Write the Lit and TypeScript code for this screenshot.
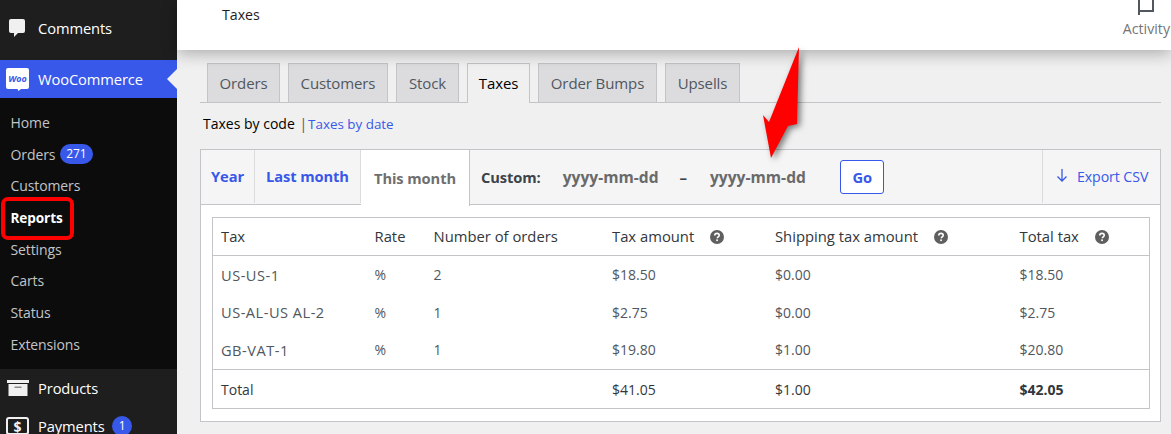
import { html, css, LitElement } from 'lit';
import { customElement } from 'lit/decorators.js';

const subItems = ['Home', 'Orders', 'Customers', 'Reports', 'Settings', 'Carts', 'Status', 'Extensions'];
const tabs = ['Orders', 'Customers', 'Stock', 'Taxes', 'Order Bumps', 'Upsells'];
const rows = [
  ['US-US-1', '%', '2', '$18.50', '$0.00', '$18.50'],
  ['US-AL-US AL-2', '%', '1', '$2.75', '$0.00', '$2.75'],
  ['GB-VAT-1', '%', '1', '$19.80', '$1.00', '$20.80'],
];

const help = html`<svg class="help" viewBox="0 0 14 14" width="14" height="14">
  <circle cx="7" cy="7" r="7" fill="#5f5f5f"></circle>
  <path d="M4.8 5.4c0-1.3 1-2 2.2-2s2.2.7 2.2 1.9c0 1.6-1.900 1.600-1.900 3" fill="none" stroke="#fff" stroke-width="1.6"></path>
  <rect x="6.2" y="9.4" width="1.7" height="1.7" fill="#fff"></rect>
</svg>`;

@customElement('app-root')
export class AppRoot extends LitElement {
  static styles = css`
    :host {
      display: block;
      width: 1171px;
      height: 434px;
      overflow: hidden;
      position: relative;
      font-family: 'Open Sans', 'Noto Sans', sans-serif;
      font-size: 14px;
      color: #3c434a;
      background: #f0f0f0;
    }
    .page {
      display: grid;
      grid-template-columns: 177px 1fr;
      height: 434px;
    }
    .side {
      background: #1e1e1e;
      color: #fff;
      font-size: 14.7px;
      letter-spacing: -0.1px;
    }
    .top {
      display: flex;
      align-items: center;
      height: 38px;
      padding-left: 6px;
      gap: 9px;
    }
    .top svg {
      flex: none;
    }
    .top.comments {
      height: 60px;
      padding: 0 0 5px 9px;
      gap: 13px;
      box-sizing: border-box;
    }
    .top.woo {
      background: #3858e9;
      position: relative;
    }
    .top.woo::after {
      content: '';
      position: absolute;
      right: 0;
      top: 9px;
      border: 10px solid transparent;
      border-right-color: #f0f0f0;
      border-left-width: 0;
    }
    .top.products {
      padding-left: 7px;
      gap: 9px;
    }
    .sub {
      background: #0c0c0c;
      padding: 8.6px 0 9px;
      color: #c3c4c7;
      font-size: 14px;
    }
    .sub div {
      display: flex;
      align-items: center;
      height: 31.7px;
      padding-left: 10.5px;
    }
    .sub .on {
      color: #fff;
      font-weight: 700;
      font-size: 13.6px;
    }
    .count {
      display: inline-block;
      margin-left: 5px;
      padding: 0 6px;
      border-radius: 10px;
      background: #3858e9;
      color: #fff;
      font-size: 12px;
      line-height: 20px;
    }
    .count.pay {
      margin-left: -2px;
      padding: 0 7px;
    }
    .main {
      min-width: 0;
    }
    .bar {
      display: flex;
      justify-content: space-between;
      height: 50px;
      background: #fff;
      box-shadow: 0 4px 16px rgba(0, 0, 0, 0.28);
      position: relative;
      color: #1e1e1e;
    }
    .bar h1 {
      margin: 6px 0 0 45px;
      font-size: 14.2px;
      line-height: 18px;
      font-weight: 400;
    }
    .activity {
      display: flex;
      flex-direction: column;
      align-items: center;
      height: 50px;
      margin: -5px 1px 0 0;
      color: #757575;
      font-size: 14.2px;
      line-height: 18px;
    }
    .activity svg {
      display: block;
      margin: 0 0 5px;
    }
    .content {
      padding: 13px 10px 0 23px;
    }
    .tabs {
      display: flex;
      gap: 8px;
      height: 39px;
      padding-left: 7px;
      border-bottom: 1px solid #c3c4c7;
    }
    .tab {
      box-sizing: border-box;
      height: 39px;
      padding-top: 10px;
      text-align: center;
      background: #dcdcde;
      border: 1px solid #c3c4c7;
      border-bottom: none;
      color: #50575e;
      font-size: 15px;
      line-height: 19px;
      font-weight: 500;
      letter-spacing: -0.1px;
    }
    .tab.on {
      height: 40px;
      background: #f0f0f0;
      color: #000;
    }
    .links {
      margin: 11px 0 0 3px;
      height: 19px;
      line-height: 19px;
      color: #000;
      font-size: 14px;
    }
    .links a {
      color: #3858e9;
      font-size: 13.4px;
      margin-left: 1px;
    }
    .links i {
      font-style: normal;
      color: #50575e;
      margin-left: 1px;
    }
    .card {
      box-sizing: border-box;
      width: 961px;
      height: 273px;
      margin: 16px 0 0;
      border: 1px solid #c3c4c7;
      background: #fff;
    }
    .ranges {
      display: flex;
      align-items: center;
      height: 55px;
      background: #f5f5f5;
      border-bottom: 1px solid #c3c4c7;
      box-sizing: border-box;
      font-size: 14.7px;
      font-weight: 700;
      letter-spacing: -0.1px;
    }
    .range {
      display: flex;
      align-items: center;
      justify-content: center;
      box-sizing: border-box;
      height: 53px;
      margin-bottom: 2px;
      border-right: 1px solid #dcdcde;
      color: #3858e9;
    }
    .range.on {
      height: 56px;
      margin: 0 0 -1px;
      background: #fff;
      color: #6f6f6f;
      border-right-color: #c3c4c7;
    }
    .custom {
      display: flex;
      align-items: center;
      margin-left: 11px;
      color: #3c434a;
    }
    .custom .date {
      color: #6a6a6a;
      margin-left: 22px;
      font-size: 15.6px;
      letter-spacing: 0;
    }
    .custom .dash {
      margin-left: 21px;
      font-size: 15px;
    }
    .custom .dash + .date {
      margin-left: 23px;
    }
    .go {
      box-sizing: border-box;
      width: 44px;
      height: 34px;
      margin-left: 34.4px;
      display: flex;
      align-items: center;
      justify-content: center;
      border: 1px solid #3858e9;
      border-radius: 3px;
      background: #fff;
      color: #3858e9;
    }
    .export {
      display: flex;
      align-items: center;
      gap: 9px;
      box-sizing: border-box;
      height: 53px;
      margin: 0 0 2px auto;
      width: 118px;
      padding-left: 13px;
      border-left: 1px solid #dcdcde;
      color: #3858e9;
      font-weight: 400;
      font-size: 14.2px;
    }
    .wrap {
      padding: 12px 11px;
    }
    table {
      width: 938px;
      table-layout: fixed;
      border-collapse: collapse;
      border: 1px solid #c3c4c7;
      font-size: 14px;
      color: #50575e;
    }
    th,
    td {
      padding: 0 0 0 8px;
      text-align: left;
      font-weight: 400;
      height: 37.5px;
      white-space: nowrap;
    }
    thead th {
      color: #32373c;
      height: 38px;
      padding-bottom: 1px;
      box-sizing: border-box;
      font-size: 14.8px;
      border-bottom: 1px solid #c3c4c7;
    }
    tbody td:first-child {
      font-size: 14.6px;
      letter-spacing: 0.5px;
    }
    tfoot td {
      color: #32373c;
      height: 39px;
      padding-top: 1px;
      box-sizing: border-box;
      border-top: 1px solid #c3c4c7;
    }
    tfoot b {
      font-weight: 700;
    }
    .help {
      vertical-align: -2px;
      margin-left: 16px;
    }
    .arrow {
      position: absolute;
      left: 755px;
      top: 40px;
      filter: drop-shadow(3px 2px 3px rgba(0, 0, 0, 0.5));
    }
    .mark {
      position: absolute;
      left: 1px;
      top: 197px;
      box-sizing: border-box;
      width: 73px;
      height: 43px;
      border: 4px solid #f00;
      border-radius: 7px;
    }
  `;

  render() {
    const tabWidths = [73, 100, 63, 63, 119, 75];
    const rangeWidths = [54, 106, 109];
    return html`
      <div class="page">
        <aside class="side">
          <div class="top comments">
            <svg viewBox="0 0 16 18" width="16" height="18">
              <path d="M2 0h12a2 2 0 0 1 2 2v10a2 2 0 0 1-2 2H9l-4 4v-4H2a2 2 0 0 1-2-2V2a2 2 0 0 1 2-2z" fill="#f0f0f1"></path>
            </svg>
            <span>Comments</span>
          </div>
          <div class="top woo">
            <svg viewBox="0 0 23 23" width="23" height="23">
              <path d="M2 0h19a2 2 0 0 1 2 2v17a2 2 0 0 1-2 2h-6l-2.500 2-1-2H2a2 2 0 0 1-2-2V2a2 2 0 0 1 2-2z" fill="#fff"></path>
              <text x="11.500" y="13.500" text-anchor="middle" fill="#3858e9" font-size="9" font-weight="700" font-style="italic">Woo</text>
            </svg>
            <span>WooCommerce</span>
          </div>
          <div class="sub">
            ${subItems.map(
              (s) => html`<div class=${s === 'Reports' ? 'on' : ''}>
                ${s}${s === 'Orders' ? html`<span class="count">271</span>` : ''}
              </div>`,
            )}
          </div>
          <div class="top products">
            <svg viewBox="0 0 22 16" width="22" height="16">
              <rect x="0" y="0" width="22" height="3" fill="#f0f0f1"></rect>
              <rect x="1.500" y="4" width="19" height="12" fill="#f0f0f1"></rect>
              <rect x="7.500" y="6.500" width="7" height="1.500" fill="#8a8a8a"></rect>
            </svg>
            <span>Products</span>
          </div>
          <div class="top">
            <svg viewBox="0 0 23 18" width="23" height="18">
              <rect x="1" y="1" width="21" height="16" rx="2" fill="none" stroke="#f0f0f1" stroke-width="2"></rect>
              <text x="11.500" y="14.500" text-anchor="middle" fill="#f0f0f1" font-size="14" font-weight="700">$</text>
            </svg>
            <span>Payments</span>
            <span class="count pay">1</span>
          </div>
        </aside>
        <main class="main">
          <header class="bar">
            <h1>Taxes</h1>
            <div class="activity">
              <svg viewBox="0 0 18 20" width="18" height="20">
                <path d="M2 0v20M2 16h14V0" fill="none" stroke="#50575e" stroke-width="2"></path>
              </svg>
              <span>Activity</span>
            </div>
          </header>
          <div class="content">
            <nav class="tabs">
              ${tabs.map(
                (t, i) =>
                  html`<div class="tab ${t === 'Taxes' ? 'on' : ''}" style="width:${tabWidths[i]}px">${t}</div>`,
              )}
            </nav>
            <div class="links">Taxes by code <i>|</i><a>Taxes by date</a></div>
            <section class="card">
              <div class="ranges">
                ${['Year', 'Last month', 'This month'].map(
                  (r, i) =>
                    html`<div class="range ${r === 'This month' ? 'on' : ''}" style="width:${rangeWidths[i]}px">${r}</div>`,
                )}
                <div class="custom">
                  <span>Custom:</span>
                  <span class="date">yyyy-mm-dd</span>
                  <span class="dash">–</span>
                  <span class="date">yyyy-mm-dd</span>
                  <span class="go">Go</span>
                </div>
                <div class="export">
                  <svg viewBox="0 0 12 14" width="12" height="14">
                    <path d="M6 0v12M1.500 7.500 6 12l4.500-4.500" fill="none" stroke="#3858e9" stroke-width="1.300"></path>
                  </svg>
                  <span>Export CSV</span>
                </div>
              </div>
              <div class="wrap">
                <table>
                  <colgroup>
                    <col style="width:154px" />
                    <col style="width:59px" />
                    <col style="width:178.500px" />
                    <col style="width:163px" />
                    <col style="width:244.500px" />
                    <col />
                  </colgroup>
                  <thead>
                    <tr>
                      <th>Tax</th>
                      <th>Rate</th>
                      <th>Number of orders</th>
                      <th>Tax amount${help}</th>
                      <th>Shipping tax amount${help}</th>
                      <th>Total tax${help}</th>
                    </tr>
                  </thead>
                  <tbody>
                    ${rows.map((r) => html`<tr>${r.map((c) => html`<td>${c}</td>`)}</tr>`)}
                  </tbody>
                  <tfoot>
                    <tr>
                      <td>Total</td>
                      <td></td>
                      <td></td>
                      <td>$41.05</td>
                      <td>$1.00</td>
                      <td><b>$42.05</b></td>
                    </tr>
                  </tfoot>
                </table>
              </div>
            </section>
          </div>
        </main>
      </div>
      <div class="mark"></div>
      <svg class="arrow" width="60" height="125" viewBox="755 40 60 125">
        <path d="M799 47 797 124 788 126 771 158 763 115 769 122z" fill="#f00"></path>
      </svg>
    `;
  }
}
